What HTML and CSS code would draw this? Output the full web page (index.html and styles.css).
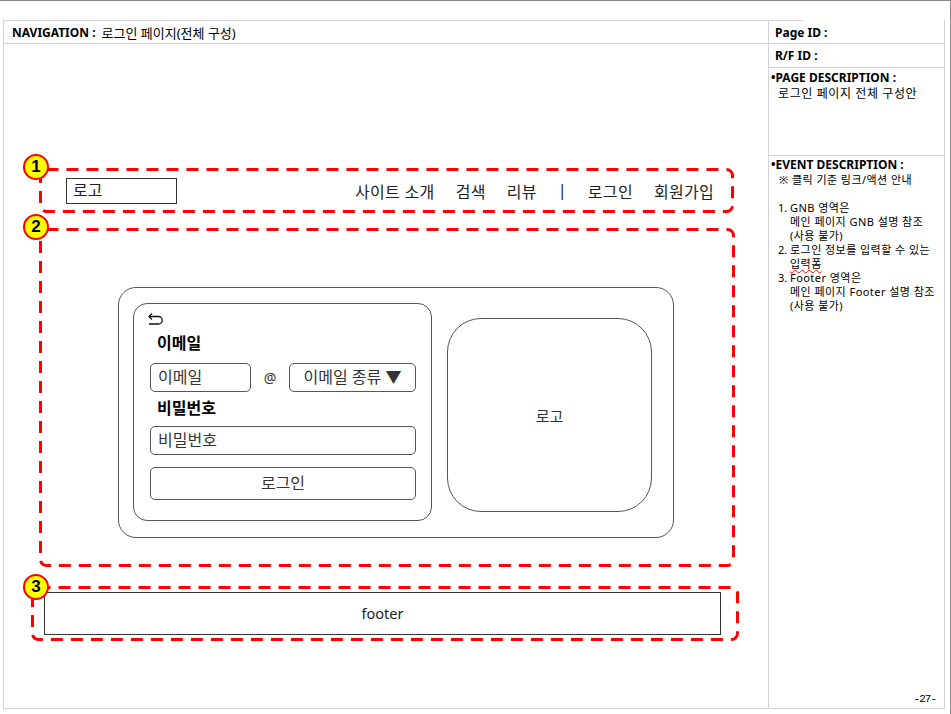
FILE: index.html
```html
<!DOCTYPE html>
<html lang="ko">
<head>
    <meta charset="UTF-8">
    <meta name="viewport" content="width=device-width, initial-scale=1.0">
    <title>로그인 페이지(전체 구성)</title>
    <link rel="stylesheet" href="styles.css">
</head>
<body>
    <div class="frame">
        <div class="sheet">
            <section class="screen">
                <div class="nav-title"><b>NAVIGATION :</b><span class="ko">로그인 페이지(전체 구성)</span></div>
                <div class="canvas">
                    <!-- 1. GNB -->
                    <div class="area area-gnb">
                        <svg class="dash"><rect/></svg>
                        <span class="badge">1</span>
                        <div class="logo-box">로고</div>
                        <nav class="gnb">
                            <span>사이트 소개</span>
                            <span>검색</span>
                            <span>리뷰</span>
                            <span>|</span>
                            <span>로그인</span>
                            <span>회원가입</span>
                        </nav>
                    </div>

                    <!-- 2. 로그인 입력폼 -->
                    <div class="area area-body">
                        <svg class="dash"><rect/></svg>
                        <span class="badge">2</span>
                        <div class="login-card">
                            <div class="login-form">
                                <svg class="back" width="17" height="12" viewBox="0 0 17 12">
                                    <path d="M2 3.5 H11.5 A3.75 3.75 0 0 1 11.5 11 H2" fill="none" stroke="#111" stroke-width="1.3"/>
                                    <path d="M5 0.5 L2 3.5 L5 6.5" fill="none" stroke="#111" stroke-width="1.3"/>
                                </svg>
                                <div class="label">이메일</div>
                                <div class="email-row">
                                    <div class="field email">이메일</div>
                                    <span class="at">@</span>
                                    <div class="field select">이메일 종류 ▼</div>
                                </div>
                                <div class="label label-pw">비밀번호</div>
                                <div class="field full">비밀번호</div>
                                <div class="btn">로그인</div>
                            </div>
                            <div class="logo-panel">로고</div>
                        </div>
                    </div>

                    <!-- 3. Footer -->
                    <div class="area area-footer">
                        <svg class="dash"><rect/></svg>
                        <span class="badge">3</span>
                        <div class="footer-box">footer</div>
                    </div>
                </div>
            </section>

            <aside class="meta">
                <div class="meta-row row-page-id">Page ID :</div>
                <div class="meta-row row-rf">R/F ID :</div>
                <div class="meta-row page-desc">
                    <div class="meta-head">•PAGE DESCRIPTION :</div>
                    <div class="desc-text">로그인 페이지 전체 구성안</div>
                </div>
                <div class="event">
                    <div class="meta-head">•EVENT DESCRIPTION :</div>
                    <div class="note">※ 클릭 기준 링크/액션 안내</div>
                    <ol class="events">
                        <li><span class="num">1.</span><span>GNB 영역은<br>메인 페이지 GNB 설명 참조<br>(사용 불가)</span></li>
                        <li><span class="num">2.</span><span>로그인 정보를 입력할 수 있는<br><span class="typo">입력폼</span></span></li>
                        <li><span class="num">3.</span><span>Footer 영역은<br>메인 페이지 Footer 설명 참조<br>(사용 불가)</span></li>
                    </ol>
                    <div class="page-num">-27-</div>
                </div>
            </aside>
        </div>
    </div>
</body>
</html>
```

FILE: styles.css
```css
* {
    box-sizing: border-box;
}

body {
    margin: 0;
    font-family: "Noto Sans", "Noto Sans CJK KR", sans-serif;
    background-color: #fff;
    color: #000;
}

.frame {
    width: 951px;
    height: 714px;
    border-top: 1px solid #8a8a8a;
    border-right: 1px solid #8a8a8a;
    padding: 19px 0 0 3px;
}

.sheet {
    display: grid;
    grid-template-columns: 764px 176px;
    width: 942px;
    height: 689px;
    border: 1px solid #d3d3d3;
    border-top: none;
}

/* left: screen */
.screen {
    border-top: 1px solid #d3d3d3;
}

.nav-title {
    height: 23px;
    display: flex;
    align-items: center;
    gap: 6px;
    padding-left: 8px;
    font-size: 12px;
    border-bottom: 1px solid #d3d3d3;
}

.nav-title .ko {
    font-size: 13px;
}

.area {
    position: relative;
    border: 3px solid transparent;
}

.dash {
    position: absolute;
    left: -3px;
    top: -3px;
    width: calc(100% + 6px);
    height: calc(100% + 6px);
    overflow: visible;
}

.dash rect {
    x: 1.5px;
    y: 1.5px;
    width: calc(100% - 3px);
    height: calc(100% - 3px);
    rx: 6px;
    fill: none;
    stroke: #ff0000;
    stroke-width: 3px;
    stroke-dasharray: 12 8;
}

.badge {
    position: absolute;
    left: -19px;
    top: -17px;
    width: 26px;
    height: 26px;
    border-radius: 50%;
    background-color: #ffff00;
    border: 2px solid #ff0000;
    font-family: "Liberation Sans", Arial, sans-serif;
    font-weight: bold;
    font-size: 17px;
    line-height: 22px;
    text-align: center;
}

.area-gnb {
    margin: 124px 0 0 35px;
    width: 695px;
    height: 45px;
    display: flex;
    align-items: center;
    justify-content: space-between;
    padding: 0 17px 0 24px;
}

.logo-box {
    width: 111px;
    height: 26px;
    border: 1px solid #333;
    font-size: 16px;
    line-height: 23px;
    padding-left: 6px;
    color: #222;
}

.gnb {
    display: flex;
    gap: 21px;
    font-size: 16px;
    letter-spacing: 0.3px;
    color: #222;
}

.area-body {
    margin: 15px 0 0 35px;
    width: 696px;
    height: 339px;
    padding: 56px 0 0 76px;
}

.login-card {
    display: flex;
    align-items: flex-start;
    gap: 15px;
    width: 556px;
    height: 251px;
    border: 1px solid #555;
    border-radius: 18px;
    padding: 15px 0 0 14px;
}

.login-form {
    display: flex;
    flex-direction: column;
    width: 299px;
    height: 218px;
    border: 1px solid #555;
    border-radius: 14px;
    padding: 9px 15px 0 16px;
}

.back {
    display: block;
    margin-left: -3px;
}

.label {
    margin-top: 8px;
    padding-left: 7px;
    font-size: 16px;
    font-weight: bold;
    line-height: 20px;
}

.label-pw {
    margin-top: 6px;
}

.email-row {
    display: flex;
    align-items: center;
    margin-top: 10px;
}

.field {
    height: 29px;
    border: 1px solid #555;
    border-radius: 5px;
    font-size: 16px;
    line-height: 27px;
    padding-left: 7px;
    color: #333;
}

.email {
    width: 101px;
}

.at {
    width: 38px;
    text-align: center;
    font-size: 14px;
    color: #333;
}

.select {
    width: 127px;
    padding-left: 0;
    text-align: center;
}

.full {
    margin-top: 8px;
    width: 266px;
}

.btn {
    margin-top: 12px;
    width: 266px;
    height: 33px;
    border: 1px solid #555;
    border-radius: 5px;
    font-size: 16px;
    line-height: 31px;
    text-align: center;
    color: #333;
}

.logo-panel {
    margin-top: 15px;
    width: 205px;
    height: 194px;
    border: 1px solid #555;
    border-radius: 34px;
    display: flex;
    align-items: center;
    justify-content: center;
    font-size: 15px;
    color: #333;
}

.area-footer {
    margin: 19px 0 0 27px;
    width: 708px;
    height: 55px;
    padding: 3px 0 0 10px;
}

.area-footer .badge {
    left: -11px;
    top: -15px;
}

.footer-box {
    width: 677px;
    height: 43px;
    border: 1px solid #333;
    font-size: 14.5px;
    line-height: 41px;
    text-align: center;
    color: #222;
}

/* right: description */
.meta {
    display: flex;
    flex-direction: column;
    border-left: 1px solid #d3d3d3;
    font-size: 12px;
}

.meta-row {
    border-bottom: 1px solid #d3d3d3;
    padding-left: 6px;
}

.row-page-id,
.row-rf {
    height: 24px;
    display: flex;
    align-items: center;
    font-weight: bold;
}

.row-page-id {
    background: linear-gradient(#d3d3d3, #d3d3d3) no-repeat 0 0 / 34px 1px;
    padding-top: 1px;
}

.page-desc {
    height: 88px;
    padding: 2px 0 0 2px;
}

.meta-head {
    font-weight: bold;
    line-height: 16px;
}

.desc-text {
    padding-left: 7px;
    line-height: 16px;
    letter-spacing: 0.6px;
}

.event {
    flex: 1;
    display: flex;
    flex-direction: column;
    padding: 1px 0 3px 2px;
}

.note,
.events {
    font-size: 11px;
    line-height: 14px;
    letter-spacing: 0.45px;
}

.note {
    padding-left: 8px;
}

.events {
    list-style: none;
    margin: 14px 0 0;
    padding-left: 7px;
}

.events li {
    display: flex;
}

.num {
    width: 12px;
    flex-shrink: 0;
    letter-spacing: 0;
}

.typo {
    text-decoration: underline wavy #ff0000;
    text-decoration-thickness: 1px;
}

.page-num {
    margin-top: auto;
    text-align: right;
    padding-right: 8px;
    font-family: "Liberation Mono", monospace;
    font-size: 11px;
    letter-spacing: -1px;
}
```
